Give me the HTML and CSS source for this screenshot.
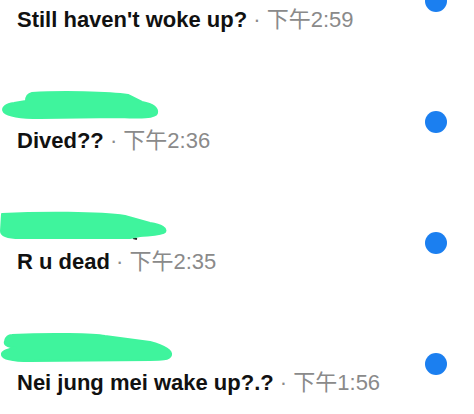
FILE: index.html
```
<!DOCTYPE html>
<html lang="en">

<head>
    <meta charset="UTF-8">
    <meta name="viewport" content="width=device-width, initial-scale=1.0">
    <title>Chats</title>
    <link rel="stylesheet" href="styles.css">
</head>

<body>
    <ul class="chat-list">
        <li class="chat">
            <div class="chat-body">
                <div class="name-row"></div>
                <div class="msg"><b>Still haven't woke up?</b> <span class="time">· 下午2:59</span></div>
            </div>
            <span class="unread"></span>
        </li>

        <li class="chat">
            <div class="chat-body">
                <svg class="scribble" width="180" height="28" viewBox="0 0 180 28">
                    <path d="M32 3 C60 1 110 2 128 5 L142 12 C152 14 158 18 157 23 C156 28 140 28 120 27 L40 28 C20 28 8 26 4 22 C1 18 6 14 14 13 L26 11 C26 6 28 4 32 3 Z" />
                </svg>
                <div class="msg"><b>Dived??</b> <span class="time">· 下午2:36</span></div>
            </div>
            <span class="unread"></span>
        </li>

        <li class="chat">
            <div class="chat-body">
                <svg class="scribble" width="180" height="28" viewBox="0 0 180 28">
                    <path class="ink" d="M18 27 L27 27 M133 27 L137 28" />
                    <path d="M2 3 C40 1 100 1 125 5 L150 12 C162 14 167 17 165 21 C163 24 150 24 140 25 L130 27 L20 27 C8 27 1 25 1 20 Z" />
                </svg>
                <div class="msg"><b>R u dead</b> <span class="time">· 下午2:35</span></div>
            </div>
            <span class="unread"></span>
        </li>

        <li class="chat">
            <div class="chat-body">
                <svg class="scribble" width="180" height="28" viewBox="0 0 180 28">
                    <path d="M12 3 C50 1 95 2 105 4 L150 10 C165 14 172 18 171 23 C170 28 160 28 150 28 L30 29 C15 29 3 28 2 23 C1 19 8 17 16 16 C6 15 4 12 5 9 C6 5 9 3 12 3 Z" />
                </svg>
                <div class="msg"><b>Nei jung mei wake up?.?</b> <span class="time">· 下午1:56</span></div>
            </div>
            <span class="unread"></span>
        </li>
    </ul>
</body>

</html>
```

FILE: styles.css
```
body {
    margin: 0;
    background-color: #ffffff;
    font-family: "Liberation Sans", Arial, "Noto Sans CJK SC", sans-serif;
    color: #111111;
}

.chat-list {
    list-style-type: none;
    margin: -60px 0 0 0;
    padding: 0;
}

.chat {
    display: flex;
    align-items: center;
    padding: 29px 27px 28px 0;
}

.chat-body {
    flex: 1;
    display: flex;
    flex-direction: column;
    gap: 10px;
}

.name-row,
.scribble {
    display: block;
    height: 28px;
    overflow: visible;
}

.scribble path {
    fill: #3ff49d;
    stroke: #3ff49d;
    stroke-width: 2;
    stroke-linejoin: round;
}

.scribble .ink {
    fill: none;
    stroke: #222222;
    stroke-width: 2;
}

.msg {
    height: 26px;
    line-height: 26px;
    padding-left: 17px;
    font-size: 22px;
    white-space: nowrap;
}

.msg b {
    font-weight: bold;
}

.time {
    color: #8a8a8a;
}

.unread {
    width: 22px;
    height: 22px;
    border-radius: 50%;
    background-color: #1b7ff0;
    flex-shrink: 0;
}
```
